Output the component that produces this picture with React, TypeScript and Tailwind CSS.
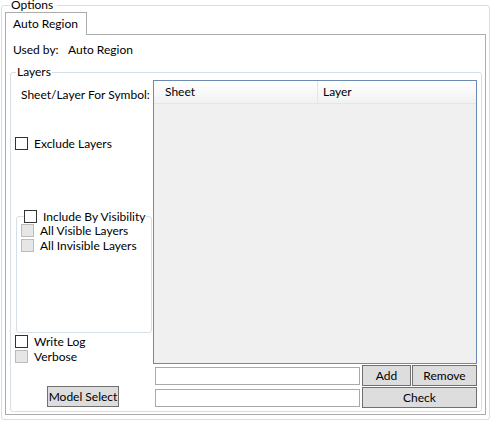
import React from 'react';

function Box({ disabled }: { disabled?: boolean }) {
    return (
        <span
            className={
                disabled
                    ? 'block w-[13px] h-[13px] shrink-0 border border-[#bcbcbc] bg-[#e6e6e6]'
                    : 'block w-[13px] h-[13px] shrink-0 border border-[#333333] bg-white'
            }
        />
    );
}

function Check({ label, disabled, className }: { label: string; disabled?: boolean; className?: string }) {
    return (
        <div className={`flex items-center gap-[6px] leading-[15px] ${className ?? ''}`}>
            <Box disabled={disabled} />
            <span className="whitespace-nowrap">{label}</span>
        </div>
    );
}

function Btn({ label, className }: { label: string; className?: string }) {
    return (
        <button className={`h-[21px] border border-[#707070] bg-[#dddddd] flex items-center justify-center text-[12px] leading-[15px] text-black whitespace-nowrap ${className ?? ''}`}>
            {label}
        </button>
    );
}

export default function App() {
    return (
        <div
            className="w-[491px] h-[422px] bg-white text-black text-[12px] pl-[1px] overflow-hidden"
            style={{ fontFamily: '"Segoe UI", Lato, "Noto Sans", sans-serif' }}
        >
            {/* Options group */}
            <fieldset className="w-[489px] h-[420px] border border-[#d5dfe5] rounded-[3px] pl-[3px] pr-[3px] pt-[2px]">
                <legend className="ml-[5px] pl-[1px] pr-[4px] leading-[10px]">Options</legend>

                {/* tab strip */}
                <div className="flex">
                    <div className="relative z-10 -mb-[1px] h-[23px] border-t border-l border-r border-[#acacac] bg-white pl-[7px] pr-[8px] flex items-center">
                        Auto Region
                    </div>
                </div>

                {/* tab page */}
                <div className="w-[481px] h-[381px] border border-[#acacac] bg-white pt-[7px] pl-[4px] pr-[3px]">
                    <div className="h-[16px] leading-[16px] pl-[3px] flex">
                        <span className="w-[55px]">Used by:</span>
                        <span>Auto Region</span>
                    </div>

                    <fieldset className="mt-[7px] h-[347px] border border-[#d5dfe5] rounded-[3px] px-0 pr-[3px]">
                        <legend className="ml-[5px] px-[1px] leading-[14px]">Layers</legend>

                        <div className="flex">
                            {/* left column */}
                            <div className="w-[142px] flex flex-col">
                                <div className="mt-[8px] leading-[16px] pl-[10px] whitespace-nowrap">Sheet/Layer For Symbol:</div>
                                <Check label="Exclude Layers" className="mt-[32px] h-[16px] pl-[4px]" />

                                <fieldset className="mt-[57px] ml-[5px] w-[136px] border border-[#d5dfe5] rounded-[3px] p-0">
                                    <legend className="ml-[7px] p-0 h-[16px] flex items-center gap-[6px] pr-[1px] leading-[15px]">
                                        <Box />
                                        <span className="whitespace-nowrap">Include By Visibility</span>
                                    </legend>
                                    <Check label="All Visible Layers" disabled className="-mt-[1px] h-[15px] pl-[4px]" />
                                    <Check label="All Invisible Layers" disabled className="h-[15px] pl-[4px]" />
                                    <div className="h-[79px]" />
                                </fieldset>

                                <Check label="Write Log" className="mt-[1px] h-[15px] pl-[4px]" />
                                <Check label="Verbose" disabled className="h-[15px] pl-[4px]" />
                                <Btn label="Model Select" className="mt-[22px] ml-[36px] w-[72px]" />
                            </div>

                            {/* right column */}
                            <div className="w-[324px] flex flex-col">
                                <div className="mt-[1px] h-[284px] border border-[#6a8cb4] bg-[#f0f0f0] flex flex-col">
                                    <div className="h-[23px] flex bg-gradient-to-b from-white to-[#f2f2f2] border-b border-[#e3e5e8]">
                                        <div className="w-[164px] border-r border-[#e3e5e8] pl-[11px] flex items-center">Sheet</div>
                                        <div className="flex-1 pl-[5px] flex items-center">Layer</div>
                                    </div>
                                </div>
                                <div className="mt-[1px] h-[21px] flex items-center">
                                    <div className="ml-[2px] w-[205px] h-[18px] border border-[#a9a9a9] bg-white" />
                                    <div className="ml-[2px] flex gap-[1px]">
                                        <Btn label="Add" className="w-[49px]" />
                                        <Btn label="Remove" className="w-[65px]" />
                                    </div>
                                </div>
                                <div className="mt-[1px] h-[21px] flex items-center">
                                    <div className="ml-[2px] w-[205px] h-[18px] border border-[#a9a9a9] bg-white" />
                                    <Btn label="Check" className="ml-[2px] w-[115px]" />
                                </div>
                            </div>
                        </div>
                    </fieldset>
                </div>
            </fieldset>
        </div>
    );
}
